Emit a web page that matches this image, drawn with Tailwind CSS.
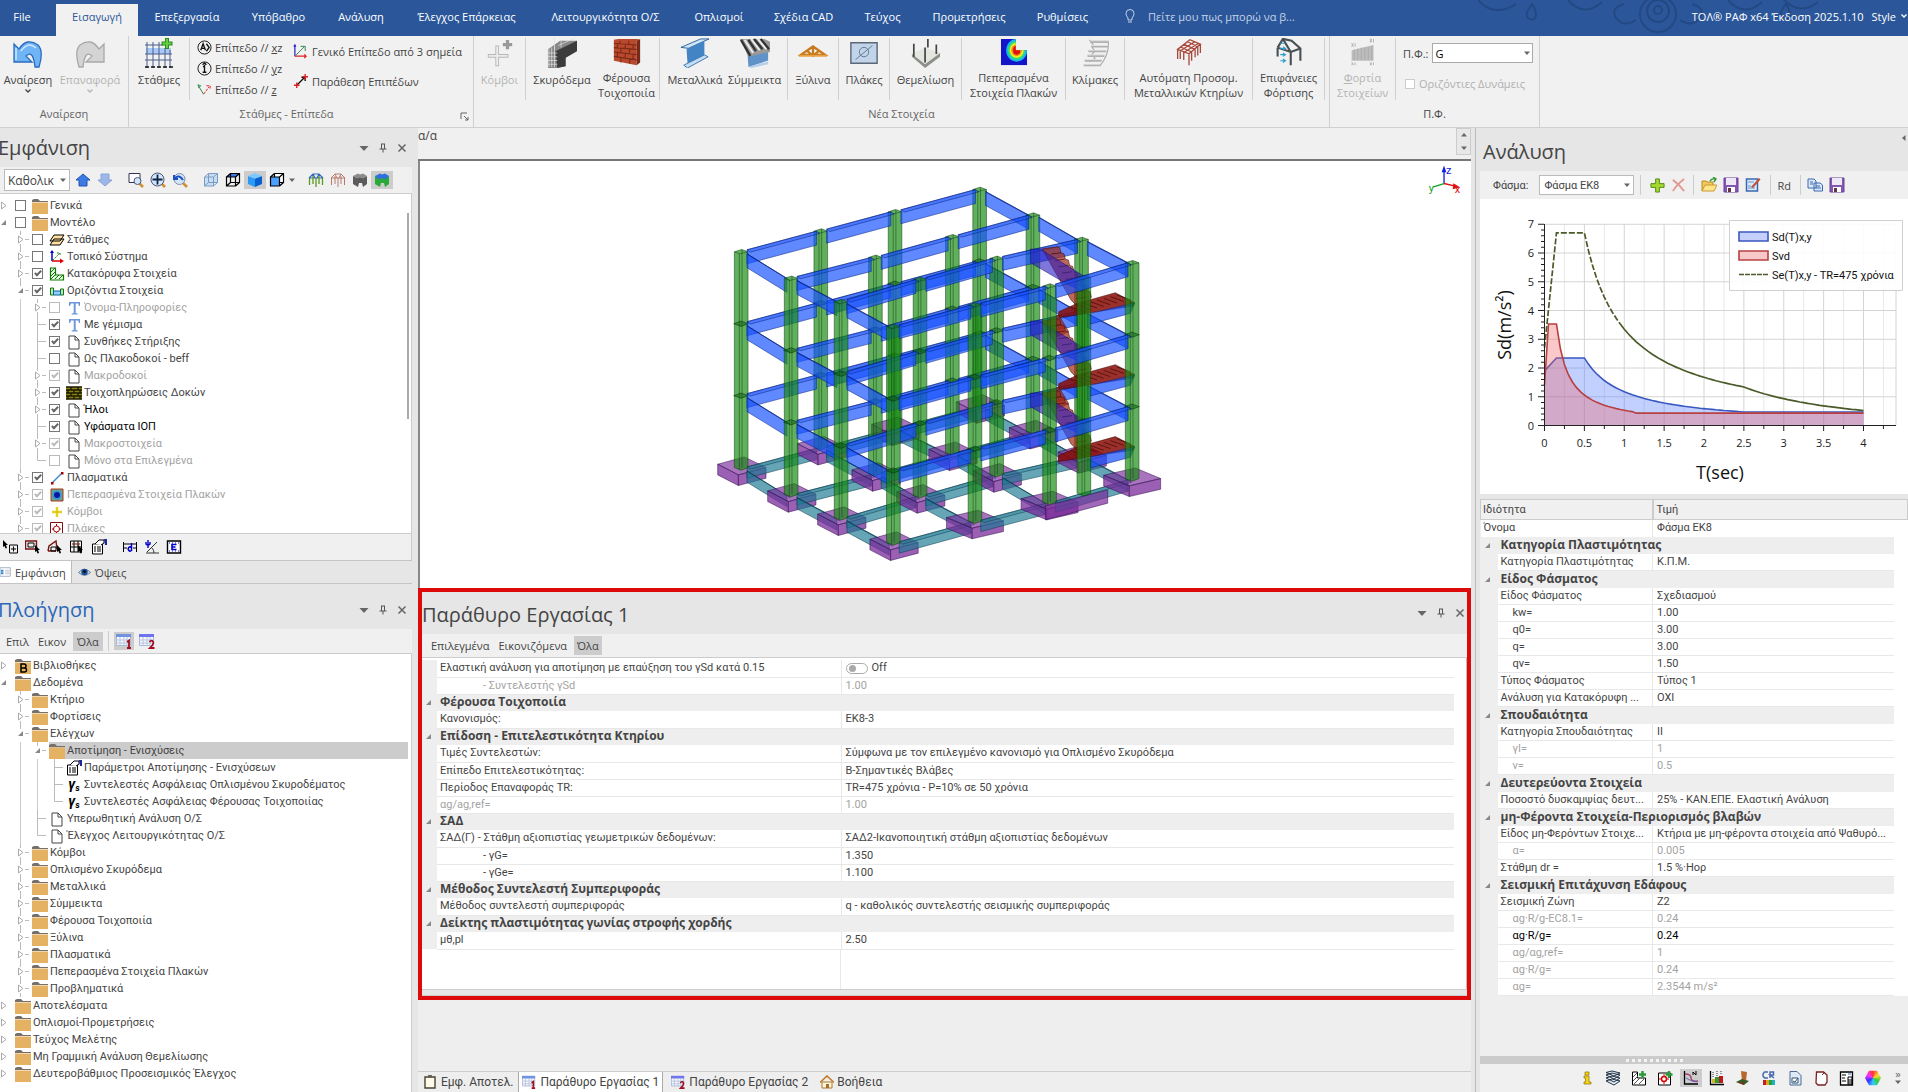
<!DOCTYPE html>
<html lang="el">
<head>
  <meta charset="UTF-8">
  <title>ΤΟΛ ΡΑΦ</title>
  <script src="https://cdn.jsdelivr.net/npm/@tailwindcss/browser@4"></script>
</head>
<body class="bg-[#e6e6e6] text-[#444] font-['Open_Sans',sans-serif] text-[11px] leading-[15px]">

<!-- Icon sprite -->
<svg width="0" height="0" class="absolute">
  <symbol id="folder" viewBox="0 0 16 16"><path d="M0 3V2l2-1h4l2 2h8v1H0z" fill="#77706a"/><path d="M0 4.500h16V16H0z" fill="#e5b163"/></symbol>
  <symbol id="folderB" viewBox="0 0 16 16"><path d="M0 3V2l2-1h4l2 2h8v1H0z" fill="#77706a"/><path d="M0 4.500h16V16H0z" fill="#e5b163"/><path d="M6 6v8h3.500a2 2 0 0 0 0-4H6h3a2 2 0 0 0 0-4z" fill="none" stroke="#000" stroke-width="1.500"/></symbol>
  <symbol id="page" viewBox="0 0 16 16"><path d="M3 2h6l4 4v9H3zM9 2v4h4" fill="#fff" stroke="#444"/></symbol>
  <symbol id="closed" viewBox="0 0 15 17"><path d="M1.500 5v7L6 8.500z" fill="#fff" stroke="#aaa"/></symbol>
  <symbol id="open" viewBox="0 0 15 17"><path d="M6 6v5H1z" fill="#888"/></symbol>
  <symbol id="closedLine" viewBox="0 0 15 17"><path d="M3.500 0v4M3.500 13v4M8 8.500h4" stroke="#bbb"/><path d="M1.500 5v7L6 8.500z" fill="#fff" stroke="#aaa"/></symbol>
  <symbol id="openLine" viewBox="0 0 15 17"><path d="M3.500 0v4M8 8.500h4" stroke="#bbb"/><path d="M6 6v5H1z" fill="#888"/></symbol>
  <symbol id="branch" viewBox="0 0 15 17"><path d="M3.500 0v17M4 8.500h8" stroke="#bbb"/></symbol>
  <symbol id="branchEnd" viewBox="0 0 15 17"><path d="M3.500 0v8.500H12" fill="none" stroke="#bbb"/></symbol>
  <symbol id="planes" viewBox="0 0 16 16"><path d="M5 3h10l-4 6H1zM5 7h10l-4 6H1z" fill="#ffe0a0" stroke="#000"/></symbol>
  <symbol id="axes" viewBox="0 0 16 16"><path d="M3 2v10" stroke="#00c" stroke-width="1.500"/><path d="M1 4l2-3 2 3z" fill="#00c"/><path d="M3 12h10" stroke="#d00" stroke-width="1.500"/><path d="M11 9.500l4 2.500-4 2.500z" fill="#d00"/><path d="M4 11l7-7M8 4h3v3" fill="none" stroke="#282" stroke-dasharray="2 1"/></symbol>
  <symbol id="ell" viewBox="0 0 16 16"><path d="M1.500 2h5v7h8v5h-13z" fill="#e6ffe6" stroke="#170" stroke-width="1.200"/><path d="M2 6l4-4M2 10l4-4M2 13l4-4M6 13l4-4M10 13l4-4" stroke="#170"/></symbol>
  <symbol id="beam" viewBox="0 0 16 16"><path d="M1.500 5h3v7h-3zM11.500 6h3v6h-3z" fill="#b8e8b8" stroke="#170"/><path d="M4.500 8h7v4h-7z" fill="#9cf" stroke="#069"/></symbol>
  <symbol id="tee" viewBox="0 0 16 16"><path d="M3 2h11v4h-1l-.8-2.500H9.700V13l2 .5v1h-6v-1l2-.5V3.500H5L4 6H3z" fill="#6f98dc"/></symbol>
  <symbol id="bricks" viewBox="0 0 16 16"><path d="M0 2h16v12H0z" fill="#8a8410"/><path d="M0 2h16M0 5h16M0 8h16M0 11h16M0 14h16M5 2v3M12 2v3M2 5v3M8 5v3M14 5v3M5 8v3M12 8v3M2 11v3M8 11v3M14 11v3" stroke="#1a1800" stroke-width="1.300"/></symbol>
  <symbol id="segment" viewBox="0 0 16 16"><path d="M3 13L13 3" stroke="#48c" stroke-width="1.500"/><path d="M2 12h2.500v2.500H2zM12 2h2.500v2.500H12z" fill="#a00"/></symbol>
  <symbol id="fem" viewBox="0 0 16 16"><path d="M2 2h12v12H2z" fill="#6ba08c" stroke="#a63a1a"/><circle cx="8" cy="8" r="4.500" fill="#2a9ae0"/><circle cx="8" cy="8" r="3" fill="#0a18a0"/></symbol>
  <symbol id="cross" viewBox="0 0 16 16"><path d="M8 3v10M3 8h10" stroke="#f2dc30" stroke-width="2.500"/><path d="M8 3v10M3 8h10" stroke="#c9b200" stroke-width=".6"/></symbol>
  <symbol id="plate" viewBox="0 0 16 16"><path d="M1.500 1.500h12v13h-12z" fill="#fff" stroke="#7a1010"/><circle cx="7.500" cy="8" r="3" fill="none" stroke="#a00"/><path d="M7.500 3v10M3 8h9" stroke="#a00" stroke-dasharray="2 6 2"/></symbol>
  <symbol id="sheet" viewBox="0 0 16 16"><path d="M1.500 5h10v10h-10z" fill="#fff" stroke="#000"/><path d="M3 8h2M6 8h4M3 10h2M6 10h4M3 12h2M6 12h4" stroke="#000"/><path d="M4 5l4-4h5v3l-3 2" fill="#fff" stroke="#000"/><path d="M13 0h3v6h-2z" fill="#1a2a9a"/></symbol>
  <symbol id="grid1" viewBox="0 0 16 16"><path d="M.5 1.500h14v11H.5z" fill="#f4f8ff" stroke="#a9b6d8"/><path d="M0 1h15v3H0z" fill="#6f93dc"/><path d="M0 7h15M0 10h15M4 4v9M8 4v9M11 4v9" stroke="#b9c4dc"/><path d="M11 9l2-1.500V15M11 15h4" fill="none" stroke="#a01020" stroke-width="1.800"/></symbol>
  <symbol id="grid2" viewBox="0 0 16 16"><path d="M.5 1.500h14v11H.5z" fill="#f4f8ff" stroke="#a9b6d8"/><path d="M0 1h15v3H0z" fill="#6f73ec"/><path d="M0 7h15M0 10h15M4 4v9M8 4v9M11 4v9" stroke="#b9c4dc"/><path d="M10.500 9q2-2.500 3.500-.5T11 15h4.500" fill="none" stroke="#a01020" stroke-width="1.800"/></symbol>
  <symbol id="down" viewBox="0 0 8 8"><path d="M1 2.500h6L4 6z" fill="#666"/></symbol>
  <symbol id="chev" viewBox="0 0 8 8"><path d="M1.500 2.500L4 5l2.500-2.500" fill="none" stroke="currentColor" stroke-width="1.300"/></symbol>
  <symbol id="wdown" viewBox="0 0 10 10"><path d="M.5 3h9L5 8z" fill="#666"/></symbol>
  <symbol id="pin" viewBox="0 0 10 10"><path d="M3 1h4M3.500 1v5M6.500 1v5M1.500 6h7M5 6v3.500" fill="none" stroke="#555"/></symbol>
  <symbol id="close" viewBox="0 0 10 10"><path d="M1.500 1.500l7 7M8.500 1.500l-7 7" stroke="#666" stroke-width="1.500"/></symbol>
  <symbol id="up16" viewBox="0 0 16 16"><path d="M8 2l7 6h-3v6H4V8H1z" fill="#3d7be0" stroke="#2254b4"/></symbol>
  <symbol id="down16" viewBox="0 0 16 16"><path d="M8 14L1 8h3V2h8v6h3z" fill="#9db8e8" stroke="#8aa4d8"/></symbol>
  <symbol id="zoomWin" viewBox="0 0 16 16"><path d="M1 1.500h11v9H1z" fill="#fdfdff" stroke="#335"/><path d="M11 11l4 4" stroke="#d09030" stroke-width="2.500"/><circle cx="9.500" cy="9" r="3.500" fill="#cfe6fa" stroke="#557"/></symbol>
  <symbol id="zoomAll" viewBox="0 0 16 16"><path d="M11 11l4 4" stroke="#d09030" stroke-width="2.500"/><circle cx="7.500" cy="7.500" r="6.500" fill="#cfe6fa" stroke="#557"/><path d="M7.500 2.500v10M2.500 7.500h10" stroke="#124" stroke-width="1.800"/></symbol>
  <symbol id="zoomPrev" viewBox="0 0 16 16"><path d="M10 10l5 5" stroke="#d09030" stroke-width="2.500"/><circle cx="7.500" cy="7" r="5.500" fill="#cfe6fa" stroke="#88a"/><path d="M2 3v4h4M3 6q4-4 8 2" fill="none" stroke="#1a50c0" stroke-width="2"/></symbol>
  <symbol id="cubeGlass" viewBox="0 0 16 16"><path d="M1.500 5h9v9h-9zM5.500 1.500h9v9h-9zM1.500 5l4-3.500M10.500 5l4-3.500M10.500 14l4-3.500M1.500 14l4-3.500" fill="#b8d4f2" fill-opacity=".7" stroke="#7a9cc4"/></symbol>
  <symbol id="cubeWire" viewBox="0 0 16 16"><path d="M1.500 5l4-3.500h9l-4 3.500z" fill="#3a7ae8"/><path d="M1.500 5h9v9h-9zM5.500 1.500h9v9h-9zM1.500 5l4-3.500M10.500 5l4-3.500M10.500 14l4-3.500M1.500 14l4-3.500" fill="none" stroke="#000" stroke-width="1.200"/></symbol>
  <symbol id="cubeSolid" viewBox="0 0 16 16"><path d="M1 4l7 2.500V15l-7-3z" fill="#2b9af6"/><path d="M15 4L8 6.500V15l7-3z" fill="#0a5fd0"/><path d="M1 4l7-3 7 3-7 2.500z" fill="#7cc8ff"/></symbol>
  <symbol id="cubeFace" viewBox="0 0 16 16"><path d="M5.500 1.500h9v9h-9z" fill="#fff"/><path d="M1.500 5h9v9h-9z" fill="#4aa0ff"/><path d="M1.500 5h9v9h-9zM5.500 1.500h9v9h-4M1.500 5l4-3.500M10.500 5l4-3.500M10.500 14l4-3.500M5.500 2v3" fill="none" stroke="#000" stroke-width="1.200"/></symbol>
  <symbol id="frameG" viewBox="0 0 16 16"><path d="M1 6l4-4h6l4 4M1 6h14M5 2l2 4M11 2L9 6" fill="none" stroke="#36b" stroke-width="1.200"/><path d="M1.500 6v7M5 4v8M8 6v9M11 4v8M14.500 6v7" stroke="#5a9a20" stroke-width="1.300"/></symbol>
  <symbol id="frameR" viewBox="0 0 16 16"><path d="M1 6l4-4h6l4 4M1 6h14M5 2l2 4M11 2L9 6M1.500 6v7M5 4v8M8 6v9M11 4v8M14.500 6v7" fill="none" stroke="#b87a70"/></symbol>
  <symbol id="blockGray" viewBox="0 0 16 16"><path d="M1 4l4 2 3-1 3 1 4-2v8l-4 3-1-4H7l-1 4-5-3z" fill="#5c5c5c"/><path d="M1 4l5-2.500 2 1 3-1L15 4l-4 2.500L8 5 5 6.500z" fill="#8c8c8c"/></symbol>
  <symbol id="blockGreen" viewBox="0 0 16 16"><path d="M1 4l4 2 3-1 3 1 4-2v8l-4 3-1-4H7l-1 4-5-3z" fill="#2aa83a"/><path d="M1 4l5-2.500 2 1 3-1L15 4l-4 3.500L8 6 5 7.500z" fill="#2f6fe0"/></symbol>
  <symbol id="pickPlus" viewBox="0 0 16 16"><path d="M0 1l5 5H3l1 3-1.500.5L1.500 7 0 8z" fill="#000"/><path d="M6.500 6h8v8h-8zM8 10h5M10.500 7.500v5" fill="none" stroke="#000"/></symbol>
  <symbol id="pickWin" viewBox="0 0 16 16"><path d="M.5 2h11v8H.5z" fill="none" stroke="#7a1010" stroke-width="1.400"/><path d="M3 4h6v4H3z" fill="none" stroke="#000"/><path d="M10 6l5 5h-2l1 3-1.500.5-1-2.500-1.500 1z" fill="#000"/></symbol>
  <symbol id="pickPoly" viewBox="0 0 16 16"><path d="M1 12l1-5 7-5 1 8M1 12h8" fill="none" stroke="#7a1010" stroke-width="1.400"/><path d="M4 8h5v4H4z" fill="none" stroke="#000"/><path d="M10 6l5 5h-2l1 3-1.500.5-1-2.500-1.500 1z" fill="#000"/></symbol>
  <symbol id="pickGrid" viewBox="0 0 16 16"><path d="M1.500 2h11v11h-11zM5 2v11M9 2v11M1.500 8h11" fill="none" stroke="#000"/><path d="M3 5h8" stroke="#7a1010"/><path d="M9 6l5 5h-2l1 3-1.500.5-1-2.500L9 13z" fill="#000"/></symbol>
  <symbol id="dim" viewBox="0 0 16 16"><path d="M1.500 3v10M14.500 3v10M2 5h12M2 9h3M11 9h3" stroke="#000"/><path d="M9.500 4v8M9.500 8.500a2 2 0 1 0 0 3" fill="none" stroke="#00c" stroke-width="1.500"/></symbol>
  <symbol id="angle" viewBox="0 0 16 16"><path d="M2 14h13M3 13L13 3M10 14q0-3-2-5" fill="none" stroke="#333"/><path d="M4 1v8M2 3v2q2 2 4 0V3" fill="none" stroke="#00c" stroke-width="1.400"/></symbol>
  <symbol id="boxE" viewBox="0 0 16 16"><path d="M1.500 2h13v12h-13z" fill="#fff" stroke="#000" stroke-width="1.400"/><path d="M3 4h10M3 12h10" stroke="#00c" stroke-dasharray="1 2"/><path d="M10.500 5.500H6v5h4.500M6 8h3.500" fill="none" stroke="#00c" stroke-width="1.600"/></symbol>
  <symbol id="eye" viewBox="0 0 14 14"><path d="M.5 7Q7 0 13.500 7 7 13 .5 7z" fill="#cfe0f4" stroke="#579"/><circle cx="7" cy="6.500" r="3.500" fill="#1a4f90"/><circle cx="7" cy="6" r="1.500" fill="#001"/></symbol>
  <symbol id="list" viewBox="0 0 14 14"><path d="M0 2h12v10H0z" fill="#fff" stroke="#9ab"/><path d="M1 5h3M1 7h3M1 9h3" stroke="#38c" stroke-width="1.500"/><path d="M6 5h5M6 7h5M6 9h5" stroke="#bbb"/></symbol>
  <symbol id="plusG" viewBox="0 0 16 16"><path d="M6 1h4v5h5v4h-5v5H6v-5H1V6h5z" fill="#a6d830" stroke="#4c8a10"/></symbol>
  <symbol id="delX" viewBox="0 0 16 16"><path d="M2 2q7 5 12 12M14 1Q6 7 2 14" fill="none" stroke="#e49a94" stroke-width="2"/></symbol>
  <symbol id="openF" viewBox="0 0 16 16"><path d="M1 14V4h4l1 1h6v3" fill="#f0c860" stroke="#b88a20"/><path d="M1 14l3-6h12l-3 6z" fill="#ffe48a" stroke="#c89a30"/><path d="M9 4q2-3 5-2M12 0l3 2-2 3" fill="none" stroke="#3a9a3a" stroke-width="1.500"/></symbol>
  <symbol id="disk" viewBox="0 0 16 16"><path d="M1 1h14v14H1z" fill="#8458b0" stroke="#6a3f98"/><path d="M3 1h10v7H3z" fill="#eee8f6"/><path d="M4 10h8v5H4z" fill="#fff"/><path d="M5 11h3v4H5z" fill="#634"/></symbol>
  <symbol id="edit" viewBox="0 0 16 16"><path d="M1.500 2h11v12h-11z" fill="#dce9fa" stroke="#3a68b0" stroke-width="1.500"/><path d="M3 5h6M3 9h3M3 11h7" stroke="#69c"/><path d="M6 10l8-9 1.500 1.500L8 11z" fill="#c0503a"/></symbol>
  <symbol id="copy" viewBox="0 0 16 16"><path d="M1 2h6l2 2v7H1zM7 6h6l2.500 2v6H7z" fill="#dce9fa" stroke="#3a68b0"/><path d="M3 5h3M3 7h3M9 9h4M9 11h5" stroke="#3a68b0"/></symbol>
  <symbol id="info" viewBox="0 0 16 16"><path d="M6 2h4v3H6zM5 6h5v6h2v2H5v-2h1.500V8H5z" fill="#f6d41a" stroke="#8a7000" stroke-width=".7"/></symbol>
  <symbol id="layers" viewBox="0 0 16 16"><path d="M1 11l6-2 8 2-6 4zM1 8l6-2 8 2-6 4zM1 5l6-2 8 2-6 4zM1 2.500L7 1l8 2-6 3z" fill="#e4eef4" stroke="#234"/></symbol>
  <symbol id="ellPlus" viewBox="0 0 16 16"><path d="M1.500 2h5v6h8v7h-13z" fill="#fff" stroke="#000"/><path d="M2 7l4-4M2 11l5-5M3 14l6-6M8 14l5-5" stroke="#555"/><path d="M11.500 1v7M8 4.500h7" stroke="#2a9a3a" stroke-width="2.500"/></symbol>
  <symbol id="platePlus" viewBox="0 0 16 16"><path d="M1.500 3h12v12h-12z" fill="#fff" stroke="#000"/><circle cx="7" cy="9" r="2.500" fill="none" stroke="#d00" stroke-width="1.500"/><path d="M7 4v10M2 9h10" stroke="#d00" stroke-dasharray="2 6 2"/><path d="M12 1v7M8.500 4.500h7" stroke="#2a9a3a" stroke-width="2.500"/></symbol>
  <symbol id="spectrum" viewBox="0 0 16 16"><path d="M1.500 1v13H15" fill="none" stroke="#000" stroke-width="1.300"/><path d="M2 4q6 0 6 4t7 3" fill="none" stroke="#a24070" stroke-width="1.500"/><path d="M3 8q4 3 11 4" fill="none" stroke="#66b"/><path d="M10 5V2l3 3V1" fill="none" stroke="#000"/></symbol>
  <symbol id="bars" viewBox="0 0 16 16"><path d="M1.500 1v13.500H15" fill="none" stroke="#000" stroke-width="1.300"/><path d="M3 13V9h3v4z" fill="#d8b020"/><path d="M6 13V7h4v6z" fill="#2a9a3a"/><path d="M10 13V6h4v7z" fill="#c01818"/><path d="M4 2v5M8 1v5M12 1v4" stroke="#333" stroke-dasharray="1 1"/></symbol>
  <symbol id="pier" viewBox="0 0 16 16"><path d="M6 1l6 1-1 9H7z" fill="#b8682a"/><path d="M1 12l6-3 7 2-5 4z" fill="#3a5a28"/><path d="M1 12l8 1v2z" fill="#802a1a"/></symbol>
  <symbol id="cr" viewBox="0 0 16 16"><path d="M7 2H3.500L2 4v2l1.500 2H7M9 8V2h3.500v3H9l4 3" fill="none" stroke="#456ab0" stroke-width="1.500"/><path d="M2 10h3v5H2z" fill="#c02020"/><path d="M5 10h3v5H5z" fill="#e0a020"/><path d="M8 10h3v5H8z" fill="#20a040"/><path d="M11 10h3v5h-3z" fill="#20b0c0"/></symbol>
  <symbol id="doc" viewBox="0 0 16 16"><path d="M3 1.500h7l4 4V15H3z" fill="#e0eaf6" stroke="#4a6a94"/><path d="M5 8h6v5H5z" fill="#fff" stroke="#357"/><path d="M6 11l2 1 3-4" fill="none" stroke="#357"/></symbol>
  <symbol id="redPage" viewBox="0 0 16 16"><path d="M3.500 2h7l3.500 3v7l-2 3h-7l-2-2z" fill="#fff" stroke="#7a2020" stroke-width="1.300"/><path d="M9 5l3-3" stroke="#7a2020"/></symbol>
  <symbol id="calc" viewBox="0 0 16 16"><path d="M1.500 2h12v13h-12z" fill="#fff" stroke="#000" stroke-width="1.300"/><path d="M3 5h4M3 8h3M3 11h4M9 7h4v7H9zM9 10h4M9 12h4" fill="none" stroke="#000"/><path d="M9 4h3" stroke="#36c"/></symbol>
  <symbol id="house" viewBox="0 0 14 14"><path d="M2 7h10v6H2z" fill="#fff4d8" stroke="#a87a30"/><path d="M0 7.500L7 1l7 6.500" fill="none" stroke="#c07a28" stroke-width="1.600"/><path d="M6 9h3v4H6z" fill="#a86a28"/></symbol>
  <symbol id="clip" viewBox="0 0 14 14"><path d="M2 2h10v11H2z" fill="#fffbe8" stroke="#443" stroke-width="1.400"/><path d="M5 0h4v3H5z" fill="#665"/></symbol>
</svg>

<div class="flex min-h-screen flex-col overflow-hidden">

  <!-- Title bar with ribbon tabs -->
  <header class="relative flex h-9 shrink-0 items-end bg-[#2b579a] text-white">
    <svg class="absolute right-[30px] top-0" width="400" height="36" fill="none" stroke="#234985" stroke-width="2">
      <path d="M0 0q16 18 38 4M90 0q16 18 34 2M250 0q16 18 34 2M306 0q16 16 34 2"/><path d="M54 4q-8 10-4 14 6 4 8-2 0-6-4-12zM308 4q-8 10-4 14 6 4 8-2 0-6-4-12z"/>
      <circle cx="180" cy="14" r="18"/><circle cx="180" cy="11" r="11"/><circle cx="180" cy="10" r="4"/><path d="M146 4q-14 4-8 14M214 4q14 4 8 14M158 20q-12 8-20-2M202 20q12 8 20-2"/>
    </svg>
    <nav class="flex h-8 text-center">
      <button class="w-14 pr-3 pb-2">File</button>
      <button class="w-[82px] bg-[#f1f1f1] pb-2 text-[#2b579a]">Εισαγωγή</button>
      <button class="w-[98px] pb-2">Επεξεργασία</button>
      <button class="w-[85px] pb-2">Υπόβαθρο</button>
      <button class="w-20 pb-2">Ανάλυση</button>
      <button class="w-[131px] pb-2">Έλεγχος Επάρκειας</button>
      <button class="w-[147px] pb-2">Λειτουργικότητα Ο/Σ</button>
      <button class="w-[80px] pb-2">Οπλισμοί</button>
      <button class="w-[89px] pb-2">Σχέδια CAD</button>
      <button class="w-[69px] pb-2">Τεύχος</button>
      <button class="w-[104px] pb-2">Προμετρήσεις</button>
      <button class="w-[83px] pb-2">Ρυθμίσεις</button>
    </nav>
    <label class="ml-5 flex h-8 items-center gap-3 pb-2 text-[#c5d3e8]">
      <svg width="12" height="14" viewBox="0 0 12 14" fill="none" stroke="#c5d3e8"><path d="M4 9Q2 7 2 4.500a4 4 0 0 1 8 0Q10 7 8 9v2H4zM4 13h4"/></svg>
      <input type="text" placeholder="Πείτε μου πως μπορώ να β..." class="w-44 bg-transparent outline-none placeholder:text-[#c5d3e8]">
    </label>
    <div class="relative ml-auto flex h-8 items-center gap-2 pb-2 whitespace-nowrap">
      <span>ΤΟΛ® ΡΑΦ x64 Έκδοση 2025.1.10</span>
      <button class="flex items-center gap-1">Style <svg class="size-2"><use href="#chev"/></svg></button>
    </div>
  </header>

  <!-- Ribbon -->
  <section class="flex h-[92px] shrink-0 border-b border-[#d0d0d0] bg-[#f1f1f1] text-center">
    <div class="flex w-[129px] flex-col border-r border-[#d0d0d0] pt-[2px]">
      <div class="flex flex-1">
        <button class="flex w-[56px] flex-col items-center">
          <svg width="30" height="30" viewBox="0 0 30 30"><path d="M1 6v18h18l-6-6q7-7 9 11h4q5-16-1-22Q14-1 6 11z" fill="#6fb4f4" stroke="#2a6cc0" stroke-width="1.300"/><path d="M3 10v12M8 13q7-10 15-3" fill="none" stroke="#cfe8ff" stroke-width="1.500"/></svg>
          <span class="mt-1">Αναίρεση</span><svg class="size-2"><use href="#chev"/></svg>
        </button>
        <button disabled class="flex w-[68px] flex-col items-center text-[#b4b4b4]">
          <svg width="30" height="30" viewBox="0 0 30 30"><path d="M29 6v18H11l6-6q-7-7-9 11H4Q-1 13 5 7q11-8 19 4z" fill="#d4d4d4" stroke="#a8a8a8" stroke-width="1.300"/></svg>
          <span class="mt-1">Επαναφορά</span><svg class="size-2"><use href="#chev"/></svg>
        </button>
      </div>
      <div class="h-[21px] text-[#666]">Αναίρεση</div>
    </div>

    <div class="flex w-[345px] flex-col border-r border-[#d0d0d0] pt-[2px]">
      <div class="flex flex-1">
        <button class="flex h-[62px] w-[61px] flex-col items-center border-r border-[#d0d0d0]">
          <svg width="30" height="30" viewBox="0 0 30 30"><path d="M2 10h25v6H2z" fill="#a9c8f8"/><path d="M3 4v26M9 4v26M15 4v26M21 10v20M26 12v18M1 7h18M1 16h27M1 22h27" stroke="#4a5f88"/><path d="M1 29h4M7 29h4M13 29h4M19 29h4M25 29h4" stroke="#111" stroke-width="1.500"/><path d="M23 0v11M17.500 5.500h11" stroke="#2c8a1c" stroke-width="4"/><path d="M23 1v9M18.500 5.500h9" stroke="#62d040" stroke-width="2"/></svg>
          <span class="mt-1">Στάθμες</span>
        </button>
        <div class="flex w-[103px] flex-col justify-between pl-[7px] pt-[2px] pb-[9px] text-left">
          <button class="flex items-center gap-[3px]"><svg width="15" height="15" viewBox="0 0 16 16" fill="none" stroke="#111"><circle cx="8" cy="8" r="7"/><path d="M4 11l2.500-7L9 11M5 9h3M10 4l3 4-3 4" stroke-width="1.400"/></svg><span>Επίπεδο // <u>x</u>z</span></button>
          <button class="flex items-center gap-[3px]"><svg width="15" height="15" viewBox="0 0 16 16" fill="none" stroke="#111"><circle cx="8" cy="8" r="7"/><path d="M6.500 6.500L8 5v7M6 12h4M6 4l2-2 2 2" stroke-width="1.400"/></svg><span>Επίπεδο // <u>y</u>z</span></button>
          <button class="flex items-center gap-[3px]"><svg width="15" height="15" viewBox="0 0 16 16" fill="none"><path d="M2 5l5 8" stroke="#284"/><path d="M1 3l3 1-2 2z" stroke="#284"/><path d="M7 13l6-8M10 4h4v3" stroke="#d22" stroke-dasharray="3 1"/></svg><span>Επίπεδο // <u>z</u></span></button>
        </div>
        <div class="flex flex-col justify-center gap-[15px] pb-[11px] text-left">
          <button class="flex items-center gap-1"><svg width="15" height="15" viewBox="0 0 16 16" fill="none"><path d="M2 13V2M1 3l1-2 1 2" stroke="#22c" stroke-width="1.300"/><path d="M2 13h12M12 11l2 2-2 2" stroke="#d22" stroke-width="1.300"/><path d="M3 12l9-9M8 2.500h5v5" stroke="#284"/></svg>Γενικό Επίπεδο από 3 σημεία</button>
          <button class="flex items-center gap-1"><svg width="15" height="15" viewBox="0 0 16 16" fill="none"><path d="M4 12l8-8M9 3.500h4v4" stroke="#111" stroke-width="1.500"/><path d="M1 12h6M4 9v6M10 3h6M13 0v6" stroke="#d22" stroke-width="1.500"/></svg>Παράθεση Επιπέδων</button>
        </div>
      </div>
      <div class="flex h-[21px] text-[#666]"><span class="flex-1 pr-4">Στάθμες - Επίπεδα</span><button aria-label="Επιλογές ομάδας"><svg class="mr-1" width="9" height="9" viewBox="0 0 9 9" fill="none" stroke="#666"><path d="M1 7V1h6M4 4l4 4M8 5v3H5"/></svg></button></div>
    </div>

    <div class="flex w-[856px] flex-col border-r border-[#d0d0d0] pt-[2px]">
      <div class="flex flex-1 items-start">
        <button disabled class="flex h-[62px] w-[52px] flex-col items-center border-r border-[#d0d0d0] text-[#b4b4b4]">
          <svg width="30" height="30" viewBox="0 0 32 32"><path d="M13 8v22M3 19h22" stroke="#b8b8b8" stroke-width="4"/><path d="M13 9v20M4 19h20" stroke="#ececec" stroke-width="2"/><path d="M24 2v10M19 7h10" stroke="#999" stroke-width="3.500"/></svg>
          <span class="mt-1">Κόμβοι</span>
        </button>
        <button class="flex w-[72px] flex-col items-center">
          <svg width="30" height="30" viewBox="0 0 32 32"><path d="M1 12L14 3h18v10l-13 7v10l-9 2H1z" fill="#888"/><path d="M9 14L32 3v11l-12 7v9l-9 2z" fill="#3c3c3c"/><path d="M2 11v20M5 10v21M8 8v23M1 16h10M1 20h10M1 24h10M1 28h10M8 0v12M15 3v7M12 8L30 0" stroke="#ddd" stroke-width=".8"/></svg>
          <span class="mt-1">Σκυρόδεμα</span>
        </button>
        <button class="flex h-[62px] w-[62px] flex-col items-center border-r border-[#d0d0d0] pr-1">
          <svg width="30" height="30" viewBox="0 0 32 32"><path d="M1 2l5-1h24l-3 2v28L1 26z" fill="#b8492c"/><path d="M27 3l4-2v27l-4 3z" fill="#7c2817"/><path d="M1 6l26 2M1 11l26 2M1 16l26 3M1 21l26 4M8 3v4M18 3v4M5 7v4M14 8v5M23 8v5M9 12v5M19 13v5M5 17v5M14 18v5M23 19v6M9 22v6M19 24v5" stroke="#7a2a18" stroke-width="1.200"/></svg>
          <span class="mt-1">Φέρουσα<br>Τοιχοποιία</span>
        </button>
        <button class="flex w-[66px] flex-col items-center pl-1">
          <svg width="30" height="30" viewBox="0 0 32 32"><path d="M1 10L22 1h9L9 11z" fill="#cfe6fa" stroke="#2a6098"/><path d="M7 12l19-9v16L8 27z" fill="#4384c4"/><path d="M4 29l22-11 4 2L8 32z" fill="#c4dcf4" stroke="#3a78b0"/></svg>
          <span class="mt-1">Μεταλλικά</span>
        </button>
        <button class="flex h-[62px] w-[62px] flex-col items-center border-r border-[#d0d0d0] pr-1">
          <svg width="30" height="30" viewBox="0 0 32 32"><path d="M8 17l22-7v14L9 31z" fill="#5e92c8"/><path d="M9 31l21-6v3l-18 4z" fill="#b4cfe8"/><path d="M0 1h26l6 3v11L9 20z" fill="#999"/><path d="M1 2l10 17M9 2l8 12M15 1l9 11M22 1l9 11" stroke="#333" stroke-width="2.500"/><path d="M5 2l9 14M12 1l9 12M19 1l9 11" stroke="#eee" stroke-width="2"/></svg>
          <span class="mt-1">Σύμμεικτα</span>
        </button>
        <button class="flex h-[62px] w-[51px] flex-col items-center border-r border-[#d0d0d0]">
          <svg width="30" height="30" viewBox="0 0 32 32"><path d="M3 18L16 9l13 9zM16 9v10M10 14l6 5 6-5" fill="none" stroke="#c8791c" stroke-width="2.500"/><path d="M1 19h30" stroke="#e8a040" stroke-width="2"/></svg>
          <span class="mt-1">Ξύλινα</span>
        </button>
        <button class="flex h-[62px] w-[51px] flex-col items-center border-r border-[#d0d0d0]">
          <svg width="30" height="30" viewBox="0 0 32 32"><path d="M2 5h28v22H2z" fill="#c2d4e8" stroke="#5a6878" stroke-width="1.500"/><ellipse cx="16" cy="15" rx="5" ry="5" fill="none" stroke="#5c7898"/><path d="M7 23L25 8" stroke="#5c7898"/></svg>
          <span class="mt-1">Πλάκες</span>
        </button>
        <button class="flex h-[62px] w-[72px] flex-col items-center border-r border-[#d0d0d0]">
          <svg width="30" height="30" viewBox="0 0 32 32"><path d="M1 17l14-7 16 6-16 13z" fill="#e4e6e0"/><path d="M1 17l14 11v4L1 20zM31 16L15 28v4l16-12z" fill="#8c9088"/><path d="M3 6v14M27 7v10M15 10v16M18 1v9" stroke="#444" stroke-width="1.800"/></svg>
          <span class="mt-1">Θεμελίωση</span>
        </button>
        <button class="flex h-[62px] w-[104px] flex-col items-center border-r border-[#d0d0d0]">
          <svg width="30" height="30" viewBox="0 0 32 32"><clipPath id="lshape"><path d="M1 1h17v13h13v17H1z"/></clipPath><g clip-path="url(#lshape)"><path d="M0 0h32v32H0z" fill="#1414c8"/><ellipse cx="19" cy="14" rx="12" ry="13" fill="#18b4f0"/><ellipse cx="19" cy="14" rx="10" ry="11" fill="#30e070"/><ellipse cx="19" cy="14" rx="8" ry="8.500" fill="#f4ee20"/><ellipse cx="19" cy="14" rx="6" ry="6.500" fill="#f08018"/><ellipse cx="19" cy="14" rx="4" ry="5" fill="#e01010"/></g></svg>
          <span class="mt-1">Πεπερασμένα<br>Στοιχεία Πλακών</span>
        </button>
        <button class="flex h-[62px] w-[59px] flex-col items-center border-r border-[#d0d0d0]">
          <svg width="30" height="30" viewBox="0 0 32 32"><path d="M10 2l4 5-1 3 3 4-3 3 3 5-6 3M30 3q2 14-9 27" fill="none" stroke="#aaa" stroke-width="1.200"/><path d="M11 4h19M12 9h18M9 14h19M8 19h18M5 24h18M4 29h17" stroke="#b0b0b0" stroke-width="2.500"/><path d="M11 3h19M12 8h18M9 13h19M8 18h18M5 23h18M4 28h17" stroke="#e4e4e4"/></svg>
          <span class="mt-1">Κλίμακες</span>
        </button>
        <button class="flex h-[62px] w-32 flex-col items-center border-r border-[#d0d0d0]">
          <svg width="30" height="30" viewBox="0 0 32 32" fill="none" stroke="#a8483a" stroke-width="1.500"><path d="M3 13L17 2l12 5-13 11zM6 10l13 6M10 7l13 6M14 4l12 6M7 14L23 4M11 16L27 6M3 13v11M6 15v9M10 16v9M16 18v13M19 16v10M23 13v9M26 10v10M29 7v10"/></svg>
          <span class="mt-1">Αυτόματη Προσομ.<br>Μεταλλικών Κτηρίων</span>
        </button>
        <button class="flex h-[62px] w-[72px] flex-col items-center border-r border-[#d0d0d0]">
          <svg width="30" height="30" viewBox="0 0 32 32" fill="none"><path d="M3 11L9 1l10 2 10 9v14M3 11l15 5 11-4M3 11v10M18 16v15M9 1l9 15" stroke="#484f55" stroke-width="2.400"/><path d="M6 12h5M9 10l3 2-3 2M6 19h5M9 17l3 2-3 2M6 26h5M9 24l3 2-3 2M6 6h5" stroke="#2aa0c8" stroke-width="1.300"/></svg>
          <span class="mt-1">Επιφάνειες<br>Φόρτισης</span>
        </button>
      </div>
      <div class="h-[21px] text-[#666]">Νέα Στοιχεία</div>
    </div>

    <div class="flex w-[210px] flex-col border-r border-[#d0d0d0] pt-[2px]">
      <div class="flex flex-1">
        <button disabled class="flex h-[62px] w-[66px] flex-col items-center border-r border-[#d0d0d0] text-[#b4b4b4]">
          <svg width="30" height="30" viewBox="0 0 32 32"><path d="M3 14l25-6v18H3z" fill="#bdbdbd"/><path d="M6 13v12M10 12v13M14 11v14M18 11v14M22 10v15M26 9v16" stroke="#aaa"/><path d="M3 6l2 4M5 6l-2 4M7 6v4M24 1l2 4M26 1l-2 4M28 1v4M3 28l2 3M5 28l-2 3M7 28v3M24 28l2 3M26 28l-2 3M28 28v3" stroke="#aaa"/></svg>
          <span class="mt-1"><u>Φ</u>ορτία<br>Στοιχείων</span>
        </button>
        <div class="flex flex-1 flex-col gap-[13px] pl-[7px] pt-[5px] text-left">
          <div class="flex items-center"><label for="pf">Π.Φ.:</label>
            <span class="relative ml-1"><select id="pf" class="h-5 w-[101px] appearance-none border border-[#aaa] bg-white pl-[2px] text-black"><option>G</option></select><svg class="pointer-events-none absolute right-[2px] top-[6px] size-2"><use href="#down"/></svg></span>
          </div>
          <label class="flex items-center gap-1 text-[#b0b0b0]"><input type="checkbox" disabled class="ml-[2px] size-[10px] appearance-none border border-[#ccc] bg-white">Οριζόντιες Δυνάμεις</label>
        </div>
      </div>
      <div class="h-[21px]">Π.Φ.</div>
    </div>
  </section>

  <main class="flex flex-1">
    <!-- Left column -->
    <aside class="flex w-[412px] shrink-0 flex-col bg-[#e6e6e6]">
      <div class="flex h-[39px] items-center pr-[3px]">
        <h2 class="-ml-[2px] flex-1 text-[20px] leading-6">Εμφάνιση</h2>
        <div class="flex gap-[9px] pr-[2px]">
          <button aria-label="Μενού"><svg class="size-[10px]"><use href="#wdown"/></svg></button>
          <button aria-label="Καρφίτσωμα"><svg class="size-[10px]"><use href="#pin"/></svg></button>
          <button aria-label="Κλείσιμο"><svg class="size-[10px]"><use href="#close"/></svg></button>
        </div>
      </div>
      <div class="flex h-[27px] items-center border-b border-[#ccc] bg-[#f0f0f0] pl-1">
        <span class="relative"><select aria-label="Προβολή" class="h-[22px] w-[66px] appearance-none border border-[#bbb] bg-white pl-[3px] text-[12px]"><option>Καθολικ</option></select><svg class="pointer-events-none absolute right-[3px] top-[7px] size-2"><use href="#down"/></svg></span>
        <div id="viewTools" class="ml-[2px] flex items-center"></div>
      </div>
      <div class="flex h-[339px] overflow-hidden border-r border-[#ccc] bg-white pt-[3px]">
        <ul id="viewTree" class="h-[336px] flex-1 overflow-hidden font-['Roboto',sans-serif]"></ul>
        <span class="mt-4 mr-[2px] h-[206px] w-[2px] bg-[#aaa]"></span>
      </div>
      <div id="pickTools" class="flex h-[27px] items-center border-t border-r border-[#ccc] bg-[#f0f0f0]"></div>
      <div class="flex h-6 border-y border-[#c4c4c4]">
        <button class="flex items-center gap-[3px] border-r border-[#bbb] bg-white pr-[5px]"><svg class="size-[12px]"><use href="#list"/></svg>Εμφάνιση</button>
        <button class="flex items-center gap-1 px-[6px]"><svg class="size-[13px]"><use href="#eye"/></svg>Όψεις</button>
      </div>
      <div class="mt-[6px] flex h-[39px] items-center pr-[3px]">
        <h2 class="-ml-[2px] flex-1 text-[20px] leading-6 text-[#2b66b8]">Πλοήγηση</h2>
        <div class="flex gap-[9px] pr-[2px]">
          <button aria-label="Μενού"><svg class="size-[10px]"><use href="#wdown"/></svg></button>
          <button aria-label="Καρφίτσωμα"><svg class="size-[10px]"><use href="#pin"/></svg></button>
          <button aria-label="Κλείσιμο"><svg class="size-[10px]"><use href="#close"/></svg></button>
        </div>
      </div>
      <div class="flex h-[25px] items-center border-b border-[#ccc] bg-[#f0f0f0] pl-1">
        <button class="px-[2px]">Επιλ</button><button class="ml-1 px-[3px]">Εικον</button>
        <button class="ml-1 h-[19px] bg-[#ccc] px-1">Όλα</button>
        <span class="mx-[5px] h-5 w-px bg-[#ccc]"></span>
        <button aria-label="Παράθυρο 1" class="bg-[#ccc] px-[2px] py-px"><svg class="size-4"><use href="#grid1"/></svg></button>
        <button aria-label="Παράθυρο 2" class="ml-[2px] p-[3px]"><svg class="size-4"><use href="#grid2"/></svg></button>
      </div>
      <div class="flex-1 border-r border-[#ccc] bg-white pt-[3px]">
        <ul id="navTree" class="font-['Roboto',sans-serif]"></ul>
      </div>
    </aside>

    <!-- Centre column -->
    <section class="ml-[6px] flex min-w-0 flex-1 flex-col bg-[#eee]">
      <div class="flex h-[33px] justify-between border-b-2 border-[#777] bg-[#f0f0f0]">
        <span class="text-[12px]">α/α</span>
        <span class="flex h-[27px] w-[15px] flex-col items-center justify-around border border-[#ccc] bg-[#e8e8e8]"><svg class="size-2 rotate-180"><use href="#down"/></svg><svg class="size-2"><use href="#down"/></svg></span>
      </div>
      <div class="h-[427px] border-l-2 border-[#888] bg-white">
        <svg id="model" class="h-full w-full" viewBox="-843 33 3156 1281"></svg>
      </div>

      <div class="flex h-[412px] flex-col border-4 border-[#dd0a0a] bg-[#e6e6e6]">
        <div class="flex h-[42px] items-center">
          <h2 class="flex-1 pt-1 text-[20px] leading-6">Παράθυρο Εργασίας 1</h2>
          <div class="flex gap-[9px] pr-[2px]">
            <button aria-label="Μενού"><svg class="size-[10px]"><use href="#wdown"/></svg></button>
            <button aria-label="Καρφίτσωμα"><svg class="size-[10px]"><use href="#pin"/></svg></button>
            <button aria-label="Κλείσιμο"><svg class="size-[10px]"><use href="#close"/></svg></button>
          </div>
        </div>
        <div class="flex h-6 items-center border-b border-[#ccc] bg-[#f0f0f0] pl-[7px]">
          <button class="px-[2px]">Επιλεγμένα</button><button class="ml-1 px-[3px]">Εικονιζόμενα</button>
          <button class="ml-1 h-[19px] bg-[#ccc] px-[3px]">Όλα</button>
        </div>
        <div class="flex flex-1 flex-col border-r border-[#bbb] bg-white pt-[2px] pr-3">
          <table class="w-full table-fixed border-collapse font-['Roboto',sans-serif]">
            <colgroup><col class="w-[15px]"><col class="w-[404px]"><col></colgroup>
            <tbody id="workTable"></tbody>
          </table>
          <div class="flex flex-1"><span class="w-[419px] border-r border-[#e8e8e8]"></span></div>
        </div>
        <div class="h-[7px] border-y border-[#ccc]"></div>
      </div>

      <div class="flex-1"></div>
      <nav class="flex h-[21px] items-center border-t border-[#ccc] font-['Roboto',sans-serif] text-[12px]">
        <button class="flex items-center gap-1 px-[5px]"><svg class="size-[14px]"><use href="#clip"/></svg>Εμφ. Αποτελ.</button>
        <button class="flex h-full items-center gap-1 border-x border-[#aaa] bg-white px-[3px]"><svg class="size-[14px]"><use href="#grid1"/></svg>Παράθυρο Εργασίας 1</button>
        <button class="flex items-center gap-1 px-2"><svg class="size-[14px]"><use href="#grid2"/></svg>Παράθυρο Εργασίας 2</button>
        <button class="flex items-center gap-[3px] px-1"><svg class="size-[14px]"><use href="#house"/></svg>Βοήθεια</button>
      </nav>
    </section>

    <!-- Right column -->
    <aside class="ml-1 flex w-[433px] shrink-0 flex-col border-l border-[#bbb] bg-[#e6e6e6] pl-[4px]">
      <div class="flex h-[43px] justify-between">
        <h2 class="pl-[3px] pt-3 text-[20px] leading-6">Ανάλυση</h2>
        <button aria-label="Σύμπτυξη" class="h-5"><svg class="size-2 rotate-90"><use href="#down"/></svg></button>
      </div>
      <div class="flex h-7 items-center bg-[#f0f0f0] pl-[13px]">
        <label for="fasma" class="font-['Roboto',sans-serif]">Φάσμα:</label>
        <span class="relative ml-[11px] font-['Roboto',sans-serif]"><select id="fasma" class="h-5 w-[95px] appearance-none border border-[#bbb] bg-white pl-1"><option>Φάσμα EK8</option></select><svg class="pointer-events-none absolute right-[3px] top-[6px] size-2"><use href="#down"/></svg></span>
        <span class="mx-[6px] h-5 w-px bg-[#ccc]"></span>
        <button aria-label="Προσθήκη" class="p-[3px]"><svg class="size-[15px]"><use href="#plusG"/></svg></button>
        <button aria-label="Διαγραφή" class="p-[3px]"><svg class="size-[15px]"><use href="#delX"/></svg></button>
        <span class="mx-[4px] h-5 w-px bg-[#ccc]"></span>
        <button aria-label="Άνοιγμα" class="p-[3px]"><svg class="size-4"><use href="#openF"/></svg></button>
        <button aria-label="Αποθήκευση" class="p-[3px]"><svg class="size-4"><use href="#disk"/></svg></button>
        <button aria-label="Επεξεργασία" class="p-[3px]"><svg class="size-4"><use href="#edit"/></svg></button>
        <span class="mx-[6px] h-5 w-px bg-[#ccc]"></span>
        <button>Rd</button>
        <span class="ml-[9px] mr-[3px] h-5 w-px bg-[#ccc]"></span>
        <button aria-label="Αντιγραφή" class="p-[3px]"><svg class="size-4"><use href="#copy"/></svg></button>
        <button aria-label="Αποθήκευση ως" class="p-[3px]"><svg class="size-4"><use href="#disk"/></svg></button>
      </div>
      <div class="h-[295px] bg-white pt-px"><svg id="chart" class="h-[293px] w-full font-['Open_Sans',sans-serif]" viewBox="0 0 428 293"></svg></div>
      <div class="mt-[5px] flex-1 bg-[#eee]">
        <table class="w-full table-fixed border-collapse font-['Roboto',sans-serif]">
          <colgroup><col class="w-[17px]"><col class="w-[155px]"><col><col class="w-[14px]"></colgroup>
          <thead><tr class="h-[20px] border border-[#ccc] bg-[#f0f0f0] text-left"><th colspan="2" class="border-r-2 border-[#ccc] pl-[2px] font-normal">Ιδιότητα</th><th colspan="2" class="pl-[3px] font-normal">Τιμή</th></tr></thead>
          <tbody id="propTable"></tbody>
        </table>
      </div>
      <div class="flex h-2 items-center justify-center gap-[3px] bg-[#cbcbcb] pr-20" id="grip"></div>
      <div id="bottomTools" class="flex h-7 items-center justify-end gap-1 bg-[#f0f0f0]"></div>
    </aside>
  </main>
</div>

<script>
const $ = id => document.getElementById(id);
const svgUse = (name, cls) => `<svg class="${cls}"><use href="#${name}"/></svg>`;

// ---------- toolbars ----------
const toolButton = name => {
  if (name === '|') return '<span class="w-[9px]"></span>';
  if (name === 'v') return svgUse('down', 'size-2');
  const on = name[0] === '*';
  const icon = on ? name.slice(1) : name;
  return `<button aria-label="${icon}" class="${on ? 'bg-[#ccc] px-[3px] py-px' : 'p-[3px]'}">${svgUse(icon, 'size-4')}</button>`;
};
const fill = (id, names) => $(id).innerHTML = names.split(' ').map(toolButton).join('');
fill('viewTools', 'up16 down16 | zoomWin zoomAll zoomPrev | cubeGlass cubeWire *cubeSolid cubeFace v | frameG frameR blockGray *blockGreen');
fill('pickTools', 'pickPlus pickWin pickPoly pickGrid sheet | dim angle boxE');
fill('bottomTools', 'info layers ellPlus platePlus *spectrum bars pier cr doc redPage calc');
$('bottomTools').innerHTML += '<button aria-label="Χρώματα" class="p-[3px]"><span class="block size-4 bg-[conic-gradient(#f33,#fd3,#3c3,#3cf,#33f,#f3f,#f33)] [clip-path:polygon(25%_4%,75%_4%,100%_50%,75%_96%,25%_96%,0_50%)]"></span></button>' +
  '<button class="flex w-5 flex-col items-center text-[#666] leading-[8px]">»' + svgUse('down', 'size-2') + '</button>';
$('grip').innerHTML = '<span class="size-[3px] bg-[#f4f4f4]"></span>'.repeat(10);

// ---------- trees ----------
// [level, expander, check, icon, text, tone]
// expander: + closed, - open, . branch, e last branch;  check: 1 on, 0 off, g greyed on, h greyed off
const expanders = { '+': ['closed', 'closedLine'], '-': ['open', 'openLine'], '.': ['branch', 'branch'], e: ['branchEnd', 'branchEnd'] };
const tones = { n: 'text-[#444]', g: 'text-[#a3a3a3]', b: 'text-black' };

function treeRow([level, exp, check, icon, text, tone = 'n', selected]) {
  let h = '';
  for (let i = 0; i < level; i++) {
    h += `<span class="h-[17px] w-[17px] shrink-0 pl-[3px]">${i ? '<span class="block h-[17px] w-px bg-[#ccc]"></span>' : ''}</span>`;
  }
  h += svgUse(expanders[exp][level ? 1 : 0], 'h-[17px] w-[15px] shrink-0');
  let body = svgUse(icon, 'mr-[2px] size-4 shrink-0') + `<span>${text}</span>`;
  if (check !== '') {
    const on = check === '1' || check === 'g';
    const grey = check === 'g' || check === 'h';
    body = `<input type="checkbox" ${on ? 'checked' : ''} ${grey ? 'disabled' : ''} class="mr-[6px] flex size-[11px] shrink-0 appearance-none items-center justify-center border border-[#777] bg-white disabled:border-[#bbb] checked:after:mb-[2px] checked:after:block checked:after:h-[7px] checked:after:w-[4px] checked:after:rotate-45 checked:after:border-r-2 checked:after:border-b-2 checked:after:border-[#666] disabled:checked:after:border-[#bbb]">` + body;
  }
  return `<li class="flex h-[17px] items-center whitespace-nowrap ${tones[tone]}">${h}<label class="${selected ? 'mr-[3px] flex h-[17px] flex-1 items-center bg-[#ccc]' : 'flex items-center'}">${body}</label></li>`;
}

$('viewTree').innerHTML = [
  [0, '+', '0', 'folder', 'Γενικά'],
  [0, '-', '0', 'folder', 'Μοντέλο'],
  [1, '+', '0', 'planes', 'Στάθμες'],
  [1, '+', '0', 'axes', 'Τοπικό Σύστημα'],
  [1, '+', '1', 'ell', 'Κατακόρυφα Στοιχεία'],
  [1, '-', '1', 'beam', 'Οριζόντια Στοιχεία'],
  [2, '+', 'h', 'tee', 'Όνομα-Πληροφορίες', 'g'],
  [2, '.', '1', 'tee', 'Με γέμισμα'],
  [2, '.', '1', 'page', 'Συνθήκες Στήριξης'],
  [2, '.', '0', 'page', 'Ως Πλακοδοκοί - beff'],
  [2, '+', 'g', 'page', 'Μακροδοκοί', 'g'],
  [2, '+', '1', 'bricks', 'Τοιχοπληρώσεις Δοκών'],
  [2, '+', '1', 'page', 'Ήλοι', 'b'],
  [2, '.', '1', 'page', 'Υφάσματα ΙΟΠ', 'b'],
  [2, '+', 'g', 'page', 'Μακροστοιχεία', 'g'],
  [2, 'e', 'h', 'page', 'Μόνο στα Επιλεγμένα', 'g'],
  [1, '+', '1', 'segment', 'Πλασματικά'],
  [1, '+', 'g', 'fem', 'Πεπερασμένα Στοιχεία Πλακών', 'g'],
  [1, '+', 'g', 'cross', 'Κόμβοι', 'g'],
  [1, '+', 'g', 'plate', 'Πλάκες', 'g'],
].map(treeRow).join('');

const gammaS = '<span class="mr-[2px] w-4 shrink-0 text-center text-[14px] leading-[15px] font-bold italic text-black">γ<sub class="text-[9px]">s</sub></span>';
$('navTree').innerHTML = [
  [0, '+', '', 'folderB', 'Βιβλιοθήκες'],
  [0, '-', '', 'folder', 'Δεδομένα'],
  [1, '+', '', 'folder', 'Κτήριο'],
  [1, '+', '', 'folder', 'Φορτίσεις'],
  [1, '-', '', 'folder', 'Ελέγχων'],
  [2, '-', '', 'folder', 'Αποτίμηση - Ενισχύσεις', 'n', true],
  [3, '.', '', 'sheet', 'Παράμετροι Αποτίμησης - Ενισχύσεων'],
  [3, '.', '', 'gammaS', 'Συντελεστές Ασφάλειας Οπλισμένου Σκυροδέματος'],
  [3, 'e', '', 'gammaS', 'Συντελεστές Ασφάλειας Φέρουσας Τοιχοποιίας'],
  [2, '.', '', 'page', 'Υπερωθητική Ανάλυση Ο/Σ'],
  [2, 'e', '', 'page', 'Έλεγχος Λειτουργικότητας Ο/Σ'],
  [1, '+', '', 'folder', 'Κόμβοι'],
  [1, '+', '', 'folder', 'Οπλισμένο Σκυρόδεμα'],
  [1, '+', '', 'folder', 'Μεταλλικά'],
  [1, '+', '', 'folder', 'Σύμμεικτα'],
  [1, '+', '', 'folder', 'Φέρουσα Τοιχοποιία'],
  [1, '+', '', 'folder', 'Ξύλινα'],
  [1, '+', '', 'folder', 'Πλασματικά'],
  [1, '+', '', 'folder', 'Πεπερασμένα Στοιχεία Πλακών'],
  [1, '+', '', 'folder', 'Προβληματικά'],
  [0, '+', '', 'folder', 'Αποτελέσματα'],
  [0, '+', '', 'folder', 'Οπλισμοί-Προμετρήσεις'],
  [0, '+', '', 'folder', 'Τεύχος Μελέτης'],
  [0, '+', '', 'folder', 'Μη Γραμμική Ανάλυση Θεμελίωσης'],
  [0, '+', '', 'folder', 'Δευτεροβάθμιος Προσεισμικός Έλεγχος'],
].map(treeRow).join('').replaceAll(svgUse('gammaS', 'mr-[2px] size-4 shrink-0'), gammaS);

// ---------- property tables ----------
// one string = group heading; [name, value, tone, indent]
function propRows(rows, indentClass, lastCell) {
  return rows.map(r => {
    if (typeof r === 'string') {
      return `<tr class="h-[17px] bg-[#eee]"><td class="p-0">${svgUse('open', 'ml-[3px] h-[17px] w-[15px] -mr-2')}</td><td colspan="2" class="h-[17px] whitespace-nowrap p-0 pb-px pl-[3px] font-['Open_Sans',sans-serif] text-[12px] leading-[14px] font-bold">${r}</td>${lastCell}</tr>`;
    }
    const [name, value, tone = 'n', indent] = r;
    return `<tr class="h-[17px] ${tones[tone]}"><td class="h-[17px] bg-[#eee] p-0"></td>` +
      `<td class="border-r border-b border-[#e8e8e8] bg-white p-0 leading-[14px] whitespace-nowrap ${indent ? indentClass : 'pl-[3px]'}">${name}</td>` +
      `<td class="overflow-hidden border-b border-[#e8e8e8] bg-white p-0 pl-[4px] leading-[14px] whitespace-nowrap">${value}</td>${lastCell}</tr>`;
  }).join('');
}

const toggle = '<label class="flex items-center gap-1"><input type="checkbox" class="flex h-[11px] w-[22px] appearance-none items-center rounded-full border border-[#aaa] bg-white before:ml-[2px] before:block before:size-[7px] before:rounded-full before:bg-[#aaa]">Off</label>';
$('workTable').innerHTML = propRows([
  ['Ελαστική ανάλυση για αποτίμηση με επαύξηση του γSd κατά 0.15', toggle],
  ['- Συντελεστής γSd', '1.00', 'g', 1],
  'Φέρουσα Τοιχοποιία',
  ['Κανονισμός:', 'ΕΚ8-3'],
  'Επίδοση - Επιτελεστικότητα Κτηρίου',
  ['Τιμές Συντελεστών:', 'Σύμφωνα με τον επιλεγμένο κανονισμό για Οπλισμένο Σκυρόδεμα'],
  ['Επίπεδο Επιτελεστικότητας:', 'Β-Σημαντικές Βλάβες'],
  ['Περίοδος Επαναφοράς TR:', 'TR=475 χρόνια - P=10% σε 50 χρόνια'],
  ['αg/ag,ref=', '1.00', 'g'],
  'ΣΑΔ',
  ['ΣΑΔ(Γ) - Στάθμη αξιοπιστίας γεωμετρικών δεδομένων:', 'ΣΑΔ2-Ικανοποιητική στάθμη αξιοπιστίας δεδομένων'],
  ['- γG=', '1.350', 'n', 1],
  ['- γGe=', '1.100', 'n', 1],
  'Μέθοδος Συντελεστή Συμπεριφοράς',
  ['Μέθοδος συντελεστή συμπεριφοράς', 'q - καθολικός συντελεστής σεισμικής συμπεριφοράς'],
  'Δείκτης πλαστιμότητας γωνίας στροφής χορδής',
  ['μθ,pl', '2.50'],
], 'pl-[46px]', '');

$('propTable').innerHTML = '<tr class="h-[17px]"><td colspan="2" class="h-[17px] border-r border-[#e8e8e8] bg-white p-0 pl-[3px] leading-[14px]">Όνομα</td><td colspan="2" class="bg-white p-0 pl-[4px] leading-[14px]">Φάσμα EK8</td></tr>' + propRows([
  'Κατηγορία Πλαστιμότητας',
  ['Κατηγορία Πλαστιμότητας', 'Κ.Π.Μ.'],
  'Είδος Φάσματος',
  ['Είδος Φάσματος', 'Σχεδιασμού'],
  ['kw=', '1.00', 'n', 1],
  ['q0=', '3.00', 'n', 1],
  ['q=', '3.00', 'n', 1],
  ['qv=', '1.50', 'n', 1],
  ['Τύπος Φάσματος', 'Τύπος 1'],
  ['Ανάλυση για Κατακόρυφη ...', 'ΟΧΙ'],
  'Σπουδαιότητα',
  ['Κατηγορία Σπουδαιότητας', 'ΙΙ'],
  ['γI=', '1', 'g', 1],
  ['ν=', '0.5', 'g', 1],
  'Δευτερεύοντα Στοιχεία',
  ['Ποσοστό δυσκαμψίας δευτ...', '25% - ΚΑΝ.ΕΠΕ. Ελαστική Ανάλυση'],
  'μη-Φέροντα Στοιχεία-Περιορισμός βλαβών',
  ['Είδος μη-Φερόντων Στοιχε...', 'Κτήρια με μη-φέροντα στοιχεία από Ψαθυρό...'],
  ['α=', '0.005', 'g', 1],
  ['Στάθμη dr =', '1.5 %·Hορ'],
  'Σεισμική Επιτάχυνση Εδάφους',
  ['Σεισμική Ζώνη', 'Ζ2'],
  ['αg·R/g-EC8.1=', '0.24', 'g', 1],
  ['αg·R/g=', '0.24', 'b', 1],
  ['αg/αg,ref=', '1', 'g', 1],
  ['αg·R/g=', '0.24', 'g', 1],
  ['αg=', '2.3544 m/s²', 'g', 1],
], 'pl-[15px]', '<td class="bg-white p-0"></td>');

// ---------- spectrum chart ----------
(() => {
  const X = t => 64.5 + t * 79.75, Y = v => 225.5 - v * 28.75;
  let s = '';
  for (let t = 0.25; t <= 4.41; t += 0.25) s += `<path d="M${X(t)} 24V225" stroke="${t % 0.5 ? '#e8e8e8' : '#d4d4d4'}"/>`;
  for (let v = 1; v <= 7; v++) s += `<path d="M64 ${Y(v)}H416" stroke="#d4d4d4"/>`;
  s += '<path d="M416 24V225" stroke="#d4d4d4"/>';
  const curve = (from, to, f) => { const p = []; for (let t = from; t <= to + 0.001; t += 0.05) p.push(`${X(t).toFixed(1)},${Y(f(t)).toFixed(1)}`); return p; };
  const pt = (t, v) => `${X(t)},${Y(v)}`;
  const blue = [pt(0, 1.9), pt(.15, 2.35), pt(.5, 2.35), ...curve(.55, 2.5, t => 1.175 / t), pt(4, .47)];
  const red = [pt(0, 1.4), pt(.05, 3.53), pt(.15, 3.53), ...curve(.2, 1.1, t => .53 / t), pt(1.15, .43), pt(4, .43)];
  s += `<polygon points="${[pt(0, 0), ...blue, pt(4, 0)].join(' ')}" fill="#5078ff" fill-opacity=".35"/><polyline points="${blue.join(' ')}" fill="none" stroke="#3a58c0" stroke-width="1.600"/>`;
  s += `<polygon points="${[pt(0, 0), ...red, pt(4, 0)].join(' ')}" fill="#f06060" fill-opacity=".35"/><polyline points="${red.join(' ')}" fill="none" stroke="#b84040" stroke-width="1.600"/>`;
  s += `<polyline points="${[pt(0, 2.7), pt(.15, 6.7), pt(.5, 6.7), ...curve(.55, .95, t => 3.35 / t)].join(' ')}" fill="none" stroke="#4a5a28" stroke-width="1.700" stroke-dasharray="6 2"/>`;
  s += `<polyline points="${[...curve(.95, 2.5, t => 3.35 / t), ...curve(2.5, 4, t => 8.375 / t / t)].join(' ')}" fill="none" stroke="#4a5a28" stroke-width="1.700"/>`;
  s += '<path d="M64.500 24V225.500H416" fill="none" stroke="#222"/>';
  for (let v = 0; v <= 35; v++) s += `<path d="M${v % 5 ? 61 : 58} ${Y(v / 5)}H64" stroke="#222"/>`;
  for (let t = 0; t <= 17; t++) s += `<path d="M${X(t / 4)} 225V${t % 2 ? 229 : 231}" stroke="#222"/>`;
  for (let v = 0; v <= 7; v++) s += `<text x="54" y="${Y(v) + 4}" text-anchor="end" font-size="11" fill="#222">${v}</text>`;
  for (let t = 0; t <= 8; t++) s += `<text x="${X(t / 2)}" y="247" text-anchor="middle" font-size="11" fill="#222">${t / 2}</text>`;
  s += '<text x="240" y="279" text-anchor="middle" font-size="18" fill="#111">T(sec)</text>';
  s += '<text transform="translate(31 125) rotate(-90)" text-anchor="middle" font-size="18" fill="#111">Sd(m/s²)</text>';
  s += '<path d="M249.500 20.500h173v70h-173z" fill="#fff" fill-opacity=".9" stroke="#d0d0d0"/>';
  s += '<path d="M259 32h29v9h-29z" fill="#c4d0fb" stroke="#3a58c0" stroke-width="1.600"/><path d="M259 51h29v9h-29z" fill="#f8c8c8" stroke="#b84040" stroke-width="1.600"/><path d="M259 74.500h29" stroke="#4a5a28" stroke-width="1.700" stroke-dasharray="5 1"/>';
  s += '<g font-size="11" fill="#111" font-family="Roboto"><text x="292" y="41">Sd(T)x,y</text><text x="292" y="60">Svd</text><text x="292" y="79">Se(T)x,y - TR=475 χρόνια</text></g>';
  $('chart').innerHTML = s;
})();

// ---------- 3D frame ----------
(() => {
  const rows = [
    [[121, 305], [360, 243], [583, 185], [837, 118]],
    [[271, 385], [524, 322], [755, 260], [997, 195]],
    [[421, 455], [658, 388], [888, 325], [1143, 268]],
    [[578, 530], [823, 465], [1047, 408], [1295, 338]],
  ];
  const storey = 216;
  const poly = (p, f, o, st) => `<polygon points="${p.map(a => a.join()).join(' ')}" fill="${f}" fill-opacity="${o}" stroke="${st}" stroke-width="2" stroke-opacity=".75"/>`;
  const beam = (a, b, dy, f, st, h = 42) => {
    const [x1, y1] = [a[0] + 18, a[1] + dy], [x2, y2] = [b[0] - 12, b[1] + dy];
    const k = b[1] > a[1] ? 6 : -6;
    return poly([[x1, y1 + k], [x2, y2], [x2, y2 + h], [x1, y1 + h + k]], f, .68, st) +
      poly([[x1, y1 + k], [x2, y2], [x2 + 10, y2 + 7], [x1 + 10, y1 + 7 + k]], f, .3, st);
  };
  const footing = ([x, y], l = 70, r = 75) =>
    poly([[x - l, y - 2], [x + 10, y - 24], [x + r, y + 8], [x - 8, y + 30]], '#7a2a9a', .65, '#2a0a4a') +
    poly([[x - l, y - 2], [x - 8, y + 30], [x - 8, y + 62], [x - l, y + 30]], '#7a2a9a', .75, '#2a0a4a') +
    poly([[x - 8, y + 30], [x + r, y + 8], [x + r, y + 40], [x - 8, y + 62]], '#7a2a9a', .75, '#2a0a4a');
  const column = ([x, y]) => {
    const b = y + 3 * storey;
    let s = poly([[x - 20, y], [x + 2, y - 7], [x + 21, y], [x + 21, b], [x, b + 8], [x - 20, b]], '#168a10', .68, '#0a3a08');
    s += `<path d="M${x - 5} ${y + 6}V${b + 6}M${x + 3} ${y - 6}V${b}M${x - 20} ${y}l15 6 26-6" fill="none" stroke="#0a3a08" stroke-width="2" stroke-opacity=".7"/>`;
    for (let i = 1; i < 3; i++) s += poly([[x - 22, y + i * storey], [x, y + i * storey - 8], [x + 22, y + i * storey], [x, y + i * storey + 8]], '#0a5a10', .5, '#063006');
    return s;
  };
  const BLUE = '#1450ff', TEAL = '#1e7a94';
  let s = '';
  // foundation
  for (let r = 0; r < 4; r++) for (let c = 0; c < 4; c++) {
    const [x, y] = rows[r][c];
    s += footing([x, y + 3 * storey - 8], r === 3 && c > 0 ? 85 : 70, r === 3 && c > 0 ? 86 : 75);
    if (c < 3) s += beam(rows[r][c], rows[r][c + 1], 3 * storey + 4, TEAL, '#0a3a4a', 34);
    if (r < 3) s += beam(rows[r][c], rows[r + 1][c], 3 * storey + 4, TEAL, '#0a3a4a', 34);
  }
  s += poly([[1035, 1068], [1222, 1020], [1222, 1060], [1035, 1110]], '#7a2a9a', .7, '#2a0a4a');
  // frame, back to front
  for (let r = 0; r < 4; r++) {
    // staircase sits between the last two rows
    if (r === 3) for (let k = 0; k < 3; k++) {
      const d = k * storey;
      const flight = [[1025, 296 + d], [1070, 290 + d]];
      for (let i = 0; i < 8; i++) flight.push([1078 + i * 13, 292 + i * 19 + d], [1082 + i * 13, 308 + i * 19 + d]);
      flight.push([1140, 478 + d], [1112, 450 + d]);
      s += poly(flight, '#a02814', .7, '#3a0404');
      s += poly([[1075, 485 + d], [1130, 460 + d], [1245, 428 + d], [1303, 458 + d], [1300, 468 + d], [1075, 503 + d]], '#8a0c06', .85, '#3a0404');
      for (let i = 0; i < 8; i++) s += `<path d="M${1110 + i * 20} ${470 - i * 5 + d}l40 14M${1052 + i * 11} ${312 + i * 19 + d}l30 -4" stroke="#3a0404" stroke-width="2"/>`;
      if (k < 2) s += poly([[1075, 495 + d], [1105, 545 + d], [1070, 560 + d], [1030, 520 + d], [1050, 505 + d]], '#a02814', .7, '#3a0404');
      s += poly([[990, 297 + d], [1020, 297 + d], [1150, 378 + d], [1150, 425 + d], [1100, 402 + d], [990, 338 + d]], '#2a1ac0', .6, '#10107a');
      s += poly([[1170, 490 + d], [1303, 458 + d], [1290, 490 + d], [1170, 522 + d]], BLUE, .7, '#06207a');
    }
    for (let c = 3; c >= 0; c--) s += column(rows[r][c]);
    if (r === 3) s += column([1150, 382]);
    for (let k = 0; k < 3; k++) {
      for (let c = 0; c < 3; c++) s += beam(rows[r][c], rows[r][c + 1], k * storey, BLUE, '#06207a');
      if (r < 3) for (const c of [0, 3]) s += beam(rows[r][c], rows[r + 1][c], k * storey, BLUE, '#06207a');
    }
  }
  // axis triad
  s += '<path d="M2232 100V60" stroke="#1020e0" stroke-width="4"/><path d="M2225 66l7-20 7 20z" fill="#1020e0"/><path d="M2232 100l34 8" stroke="#e01010" stroke-width="4"/><path d="M2260 99l20 12-22 6z" fill="#e01010"/><path d="M2232 100l-32 10" stroke="#10a020" stroke-width="4"/>';
  s += '<g font-size="33" font-family="Roboto"><text x="2238" y="72" fill="#1020e0">z</text><text x="2264" y="130" fill="#e01010">x</text><text x="2186" y="126" fill="#10a020">y</text></g>';
  $('model').innerHTML = s;
})();
</script>
</body>
</html>
